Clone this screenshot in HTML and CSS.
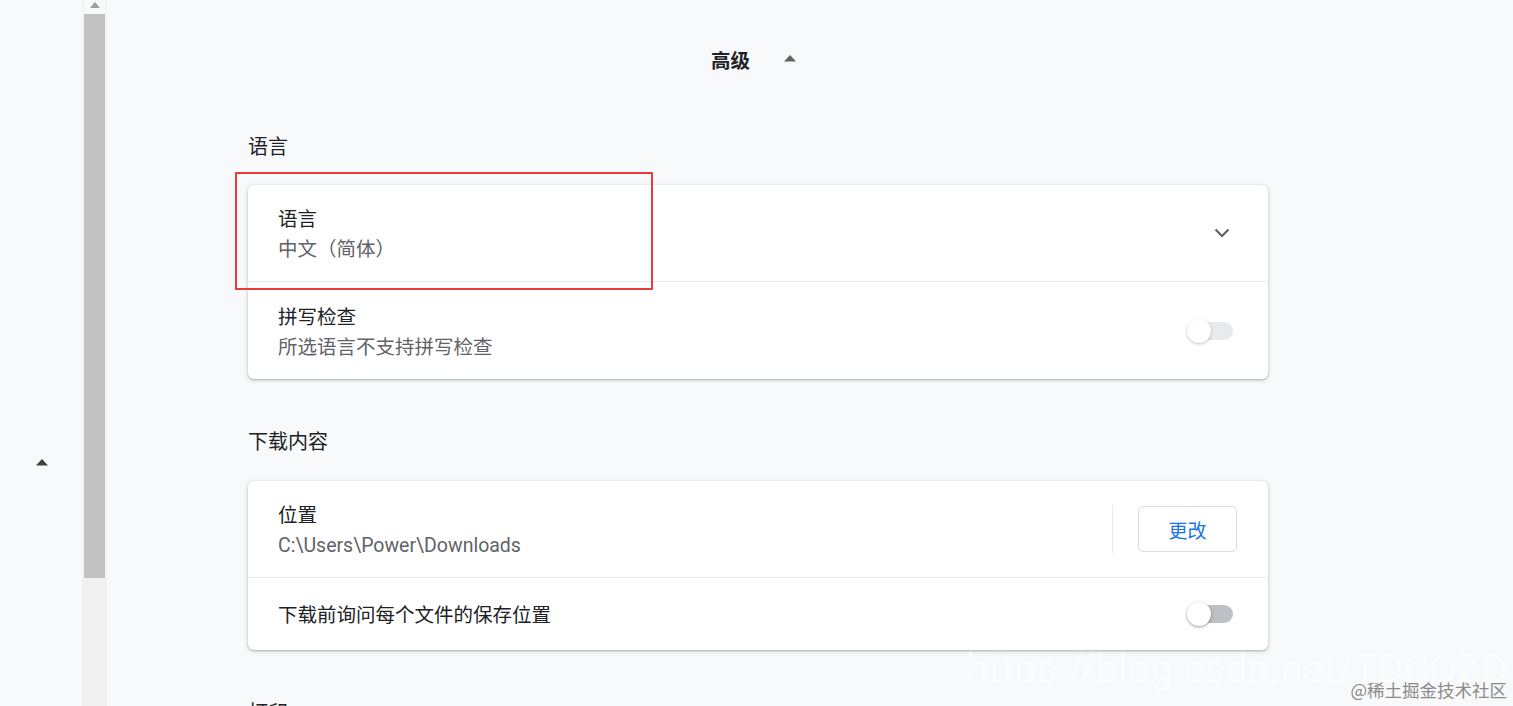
FILE: index.html
```html
<!DOCTYPE html>
<html lang="zh-CN">
<head>
<meta charset="utf-8">
<title>设置 - 高级</title>
<link rel="stylesheet" href="styles.css">
</head>
<body>
  <aside class="side">
    <svg class="side-arrow" width="14" height="8" viewBox="0 0 14 8"><path d="M1 7.5 L7 1 L13 7.5 Z" fill="#3c4043"/></svg>
  </aside>
  <div class="scrollbar">
    <div class="sb-btn"><svg width="12" height="8" viewBox="0 0 12 8"><path d="M1 7 L6 1 L11 7 Z" fill="#9e9e9e"/></svg></div>
    <div class="sb-thumb"></div>
    <div class="sb-track"></div>
  </div>
  <main class="main">
    <div class="adv-head">
      <span class="adv-title">高级</span>
      <svg class="adv-arrow" width="14" height="8" viewBox="0 0 14 8"><path d="M1 7.5 L7 1 L13 7.5 Z" fill="#5f6368"/></svg>
    </div>

    <h2 class="sec-title">语言</h2>
    <div class="card-wrap">
      <div class="card">
        <div class="row row-two">
          <div class="row-text">
            <div class="label">语言</div>
            <div class="sub">中文（简体）</div>
          </div>
          <svg class="chevron" width="16" height="10" viewBox="0 0 16 10"><path d="M1.5 1.5 L8 8 L14.5 1.5" fill="none" stroke="#5f6368" stroke-width="2.2"/></svg>
        </div>
        <div class="row row-two row-b">
          <div class="row-text">
            <div class="label">拼写检查</div>
            <div class="sub">所选语言不支持拼写检查</div>
          </div>
          <div class="toggle toggle-disabled"><span class="knob"></span></div>
        </div>
      </div>
      <div class="highlight"></div>
    </div>

    <h2 class="sec-title sec-gap">下载内容</h2>
    <div class="card-wrap">
      <div class="card">
        <div class="row row-two">
          <div class="row-text">
            <div class="label">位置</div>
            <div class="sub latin">C:\Users\Power\Downloads</div>
          </div>
          <div class="vsep"></div>
          <button class="btn">更改</button>
        </div>
        <div class="row row-one">
          <div class="row-text">
            <div class="label">下载前询问每个文件的保存位置</div>
          </div>
          <div class="toggle"><span class="knob"></span></div>
        </div>
      </div>
    </div>

    <h2 class="sec-title sec-gap">打印</h2>
  </main>
  <div class="wm-url">https://blog.csdn.net/TDCQZD</div>
  <div class="wm">@稀土掘金技术社区</div>
</body>
</html>
```

FILE: styles.css
```css
html, body {
  margin: 0;
  padding: 0;
  height: 100%;
  overflow: hidden;
}
body {
  background: #f8f9fa;
  display: flex;
  font-family: Roboto, "Noto Sans CJK SC", sans-serif;
  color: #202124;
}
.side {
  width: 81px;
  flex: none;
  display: flex;
  justify-content: center;
  padding-right: 1px;
}
.side-arrow {
  margin-top: 458px;
  margin-left: 2px;
}
.scrollbar {
  width: 25px;
  flex: none;
  display: flex;
  flex-direction: column;
  align-items: center;
  background: #f3f3f3;
}
.sb-btn {
  height: 14px;
  width: 21px;
  display: flex;
  justify-content: center;
  align-items: flex-start;
  padding-top: 1px;
  box-sizing: border-box;
  background: #f8f9fa;
}
.sb-thumb {
  width: 21px;
  height: 564px;
  background: #c1c1c1;
}
.sb-track {
  flex: 1;
  width: 25px;
  background: #f1f1f1;
}
.main {
  flex: none;
  width: 1020px;
  padding-left: 141px;
}
.adv-head {
  padding-top: 40px;
  height: 38px;
  display: flex;
  align-items: center;
  justify-content: center;
  padding-right: 8px;
}
.adv-title {
  font-family: "Noto Sans CJK SC", sans-serif;
  font-weight: bold;
  font-size: 19.5px;
  color: #202124;
}
.adv-arrow {
  margin-left: 33px;
  margin-top: -2px;
}
.sec-title {
  margin: 54px 0 0 0;
  font-weight: normal;
  font-size: 20px;
  line-height: 28px;
  height: 28px;
  color: #202124;
  font-family: "Noto Sans CJK SC", sans-serif;
}
.sec-gap {
  margin-top: 48px;
}
.card-wrap {
  position: relative;
  margin-top: 25px;
}
.sec-gap + .card-wrap {
  margin-top: 26px;
}
.card {
  background: #fff;
  border-radius: 6px;
  box-shadow: 0 1px 2px rgba(60, 64, 67, 0.3), 0 1px 4px 1px rgba(60, 64, 67, 0.12);
}
.row {
  display: flex;
  align-items: center;
  padding: 0 35px 0 30px;
  box-sizing: border-box;
}
.row + .row {
  border-top: 1px solid #e8eaed;
}
.row-two {
  height: 96px;
}
.row-b {
  height: 98px;
}
.row-one {
  height: 73px;
}
.row-text {
  flex: 1;
  padding-top: 4px;
}
.label {
  font-size: 19.5px;
  line-height: 30px;
  color: #202124;
}
.sub {
  font-size: 19.5px;
  line-height: 30px;
  color: #5f6368;
}
.chevron {
  margin-right: 3px;
}
.toggle {
  position: relative;
  width: 46px;
  height: 24px;
  display: flex;
  align-items: center;
  justify-content: flex-end;
}
.toggle::before {
  content: "";
  width: 40px;
  height: 18px;
  border-radius: 9px;
  background: #bdc1c6;
}
.toggle-disabled::before {
  background: #e8eaed;
}
.knob {
  position: absolute;
  left: 0;
  top: 0;
  width: 24px;
  height: 24px;
  border-radius: 50%;
  background: #fff;
  box-shadow: 0 1px 3px rgba(0, 0, 0, 0.4);
}
.toggle-disabled .knob {
  box-shadow: 0 1px 3px rgba(0, 0, 0, 0.25);
}
.vsep {
  width: 1px;
  height: 48px;
  background: #e8eaed;
  margin-right: 25px;
}
.btn {
  width: 99px;
  height: 46px;
  border: 1px solid #dadce0;
  border-radius: 5px;
  background: #fff;
  color: #1a73e8;
  font-family: "Noto Sans CJK SC", sans-serif;
  font-size: 19px;
  padding: 0;
  margin-right: -4px;
}
.highlight {
  position: absolute;
  left: -13px;
  top: -13px;
  width: 418px;
  height: 118px;
  box-sizing: border-box;
  border: 2px solid #e63c3c;
  pointer-events: none;
}
.wm-url {
  position: absolute;
  left: 966px;
  top: 646px;
  font-family: Roboto, sans-serif;
  font-size: 40px;
  color: rgba(255, 255, 255, 0.6);
  white-space: nowrap;
}
.wm {
  position: absolute;
  right: 6px;
  top: 677px;
  font-family: "Noto Sans CJK SC", sans-serif;
  font-size: 17.5px;
  color: #8c8c8c;
  white-space: nowrap;
}
```
